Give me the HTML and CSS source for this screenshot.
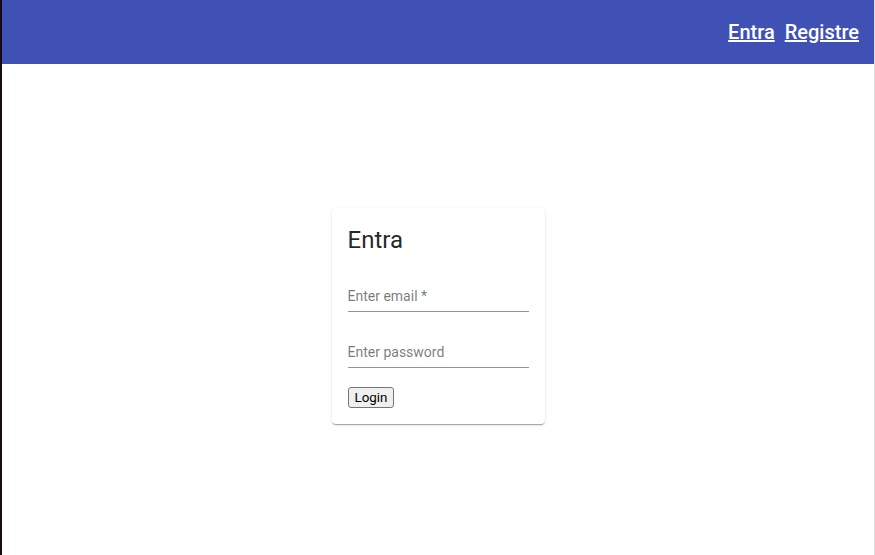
FILE: index.html
```html
<!DOCTYPE html>
<html>
<head>
<meta charset="utf-8">
<link rel="stylesheet" href="styles.css">
</head>
<body>
<div class="app">
  <header class="bar">
    <nav class="nav">
      <a href="#" class="nav-link">Entra</a>
      <a href="#" class="nav-link">Registre</a>
    </nav>
  </header>
  <main class="main">
    <div class="card">
      <h2 class="title">Entra</h2>
      <div class="field"><span class="label">Enter email *</span></div>
      <div class="field"><span class="label">Enter password</span></div>
      <button class="btn" type="button">Login</button>
    </div>
  </main>
</div>
</body>
</html>
```

FILE: styles.css
```css
html, body {
  margin: 0;
  padding: 0;
  background: #fff;
}
body {
  font-family: Roboto, "Liberation Sans", sans-serif;
}
.app {
  height: 555px;
  border-left: 2px solid #170a17;
  border-right: 1px solid #dcdcdc;
  display: flex;
  flex-direction: column;
  box-sizing: border-box;
}
.bar {
  height: 64px;
  flex: none;
  background: #3f51b5;
  display: flex;
  align-items: center;
  justify-content: flex-end;
  padding-right: 15px;
}
.nav {
  display: flex;
  gap: 10px;
}
.nav-link {
  color: #fff;
  font-size: 20px;
  font-weight: 500;
  line-height: 24px;
  text-decoration: underline;
}
.main {
  flex: 1;
  display: flex;
  justify-content: center;
  align-items: flex-start;
  padding-top: 144px;
}
.card {
  width: 181px;
  padding: 16px;
  background: #fff;
  border-radius: 4px;
  box-shadow: 0 2px 1px -1px rgba(0,0,0,0.2), 0 1px 1px 0 rgba(0,0,0,0.14), 0 1px 3px 0 rgba(0,0,0,0.12);
  display: flex;
  flex-direction: column;
  align-items: flex-start;
}
.title {
  margin: 0;
  font-size: 24px;
  font-weight: 400;
  line-height: 32px;
  color: rgba(0,0,0,0.87);
}
.field {
  align-self: stretch;
  margin-top: 31px;
  padding-bottom: 5px;
  border-bottom: 1px solid rgba(0,0,0,0.42);
}
.label {
  display: block;
  font-size: 14px;
  line-height: 19px;
  color: rgba(0,0,0,0.54);
}
.btn {
  margin-top: 19px;
  font-family: Roboto, "Liberation Sans", sans-serif;
  font-size: 13.33px;
  font-weight: 400;
  line-height: 17px;
  padding: 1px 6px;
  color: #000;
  background: #efefef;
  border: 1px solid #767676;
  border-radius: 3px;
}
```
